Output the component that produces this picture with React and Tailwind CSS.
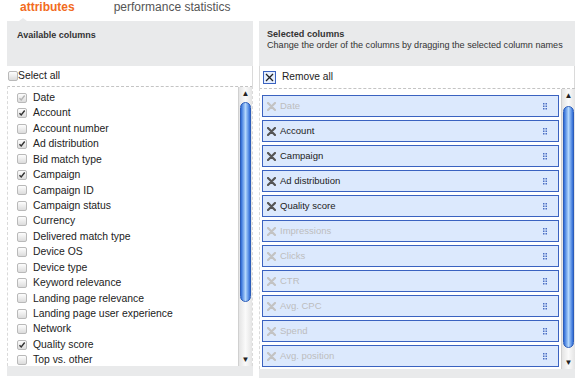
import React from 'react';

const available = [
  { name: 'Date', checked: true, disabled: true },
  { name: 'Account', checked: true },
  { name: 'Account number' },
  { name: 'Ad distribution', checked: true },
  { name: 'Bid match type' },
  { name: 'Campaign', checked: true },
  { name: 'Campaign ID' },
  { name: 'Campaign status' },
  { name: 'Currency' },
  { name: 'Delivered match type' },
  { name: 'Device OS' },
  { name: 'Device type' },
  { name: 'Keyword relevance' },
  { name: 'Landing page relevance' },
  { name: 'Landing page user experience' },
  { name: 'Network' },
  { name: 'Quality score', checked: true },
  { name: 'Top vs. other' },
];

const selected = [
  { name: 'Date', locked: true },
  { name: 'Account' },
  { name: 'Campaign' },
  { name: 'Ad distribution' },
  { name: 'Quality score' },
  { name: 'Impressions', locked: true },
  { name: 'Clicks', locked: true },
  { name: 'CTR', locked: true },
  { name: 'Avg. CPC', locked: true },
  { name: 'Spend', locked: true },
  { name: 'Avg. position', locked: true },
];

function Checkbox({ checked, disabled }) {
  return (
    <span className="w-[10px] h-[10px] rounded-[2px] border border-[#b9b9b9] bg-gradient-to-b from-[#fdfdfd] to-[#dcdcdc] flex items-center justify-center shrink-0">
      {checked && (
        <svg width="8" height="8" viewBox="0 0 8 8">
          <path d="M1.5 4.2 L3.2 6 L6.7 1.5" fill="none" stroke={disabled ? '#b5b5b5' : '#333'} strokeWidth="1.4" />
        </svg>
      )}
    </span>
  );
}

function XMark({ color }) {
  return (
    <svg width="9" height="9" viewBox="0 0 9 9" className="shrink-0">
      <path d="M1 1 L8 8 M8 1 L1 8" stroke={color} strokeWidth="2.2" strokeLinecap="round" />
    </svg>
  );
}

function Grip() {
  return (
    <svg width="4" height="7" viewBox="0 0 4 7">
      {[0, 2.5, 5].map((y) => (
        <g key={y}>
          <rect x="0" y={y} width="1.5" height="1.5" fill="#4a6fc4" />
          <rect x="2.5" y={y} width="1.5" height="1.5" fill="#4a6fc4" />
        </g>
      ))}
    </svg>
  );
}

function Scrollbar({ thumbTop, thumbBottom }) {
  return (
    <div className="w-[14px] h-full flex flex-col bg-gradient-to-r from-[#e4e4e4] via-[#fafafa] to-[#e4e4e4] border-l border-[#d0d0d0]">
      <div className="h-[13px] flex items-center justify-center text-[8px] leading-none text-[#222]">▲</div>
      <div className="flex-1 relative">
        <div
          className="absolute left-[1px] right-[1px] rounded-full border border-[#2c5db9] bg-gradient-to-r from-[#2f6bd6] via-[#b3d7fc] to-[#2f6bd6]"
          style={{ top: thumbTop, bottom: thumbBottom }}
        />
      </div>
      <div className="h-[13px] flex items-center justify-center text-[8px] leading-none text-[#222]">▼</div>
    </div>
  );
}

export default function App() {
  return (
    <div className="w-[587px] h-[387px] bg-white overflow-hidden font-['Liberation_Sans',Arial,sans-serif] text-[#222]">
      <div className="h-[21px] flex items-start pl-[20px] text-[12px] leading-[15px]">
        <span className="font-bold text-[#f26b21]">attributes</span>
        <span className="ml-[39px] text-[#555]">performance statistics</span>
      </div>

      <div className="flex pl-[7px] gap-[6px]">
        {/* Available */}
        <div className="w-[246px] flex flex-col relative">
          <div className="absolute left-[12px] -top-[3px] w-0 h-0 border-l-[4px] border-r-[4px] border-b-[3px] border-l-transparent border-r-transparent border-b-[#e9eaeb]" />
          <div className="h-[45px] bg-[#e9eaeb] px-[10px] pt-[9px] text-[9px] font-bold leading-[11px] text-[#333]">Available columns</div>
          <div className="h-[20px] flex items-center pl-[1px] text-[10.4px] border-r border-[#dadada]">
            <Checkbox />
            <span className="text-[#1a1a1a]">Select all</span>
          </div>
          <div className="h-[280px] flex border-t border-dashed border-[#c4c4c4] border-l border-l-[#dadada] border-r border-r-[#dadada]">
            <div className="flex-1 pt-[3px] pl-[9px]">
              {available.map((c) => (
                <div key={c.name} className="h-[15.45px] flex items-center gap-[6px] text-[10.4px]">
                  <Checkbox checked={c.checked} disabled={c.disabled} />
                  <span>{c.name}</span>
                </div>
              ))}
            </div>
            <Scrollbar thumbTop={2} thumbBottom={51} />
          </div>
          <div className="h-[10px] bg-[#e9eaeb]" />
        </div>

        {/* Selected */}
        <div className="w-[316px] flex flex-col">
          <div className="h-[45px] bg-[#e9eaeb] px-[8px] pt-[8px] text-[9.1px] leading-[11px] text-[#333]">
            <div className="font-bold">Selected columns</div>
            <div>Change the order of the columns by dragging the selected column names</div>
          </div>
          <div className="h-[22px] flex items-center pl-[3px] gap-[6px] text-[10.2px] border-l border-r border-[#dadada]">
            <span className="w-[13px] h-[13px] border border-[#3a62c0] bg-[#e6effd] flex items-center justify-center">
              <svg width="9" height="9" viewBox="0 0 9 9">
                <path d="M1 1 L8 8 M8 1 L1 8" stroke="#222" strokeWidth="1.3" />
              </svg>
            </span>
            <span>Remove all</span>
          </div>
          <div className="h-[281px] flex border-t border-dashed border-[#c4c4c4] border-l border-l-[#dadada]">
            <div className="flex-1 pt-[6px] pl-[2px] pr-[2px] flex flex-col gap-[3px]">
              {selected.map((c) => (
                <div key={c.name} className="h-[22px] flex items-center border border-[#3a62c0] bg-[#dce9fd] pl-[4px] pr-[11px] gap-[4px] text-[9.5px]">
                  <XMark color={c.locked ? '#c3c3c3' : '#555'} />
                  <span className={c.locked ? 'text-[#bdbdbd]' : 'text-[#222]'}>{c.name}</span>
                  <span className="ml-auto flex"><Grip /></span>
                </div>
              ))}
            </div>
            <Scrollbar thumbTop={4} thumbBottom={8} />
          </div>
          <div className="h-[9px] bg-[#e9eaeb]" />
        </div>
      </div>
    </div>
  );
}
